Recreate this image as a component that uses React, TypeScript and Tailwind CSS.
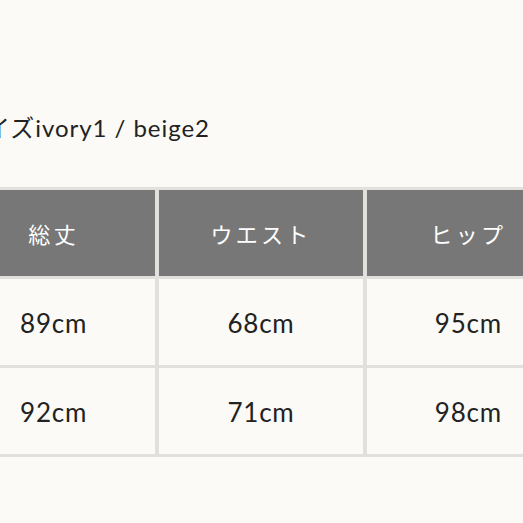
import React from 'react';

export default function App() {
  const headers = ['総丈', 'ウエスト', 'ヒップ'];
  const rows = [
    ['89cm', '68cm', '95cm'],
    ['92cm', '71cm', '98cm'],
  ];

  return (
    <div
      className="w-[523px] h-[523px] overflow-hidden bg-[#fbfaf7] text-[#222]"
      style={{ fontFamily: 'Lato, "Noto Sans CJK JP", sans-serif' }}
    >
      <div className="ml-[-52px] w-[625px]">
        {/* title */}
        <div className="pt-[110px] pl-[13px] text-[24px] leading-[36px] tracking-[0.04em] whitespace-nowrap">
          サイズivory1 / beige2
        </div>

        {/* size table */}
        <div className="mt-[41px] grid grid-cols-3 gap-x-[4px] gap-y-[3px] bg-[#e2e0dc] p-[3px] pl-[4px]">
          {headers.map((h) => (
            <div
              key={h}
              className="h-[86px] bg-[#777777] text-white flex items-center justify-center text-[22px] tracking-[0.15em]"
              style={{ fontFamily: '"Noto Sans CJK JP", sans-serif' }}
            >
              {h}
            </div>
          ))}
          {rows.map((r, i) =>
            r.map((v, j) => (
              <div
                key={i + '-' + j}
                className="h-[86px] pt-[3px] bg-[#fbfaf7] flex items-center justify-center text-[26px] tracking-[0.03em]"
              >
                {v}
              </div>
            ))
          )}
        </div>
      </div>
    </div>
  );
}
